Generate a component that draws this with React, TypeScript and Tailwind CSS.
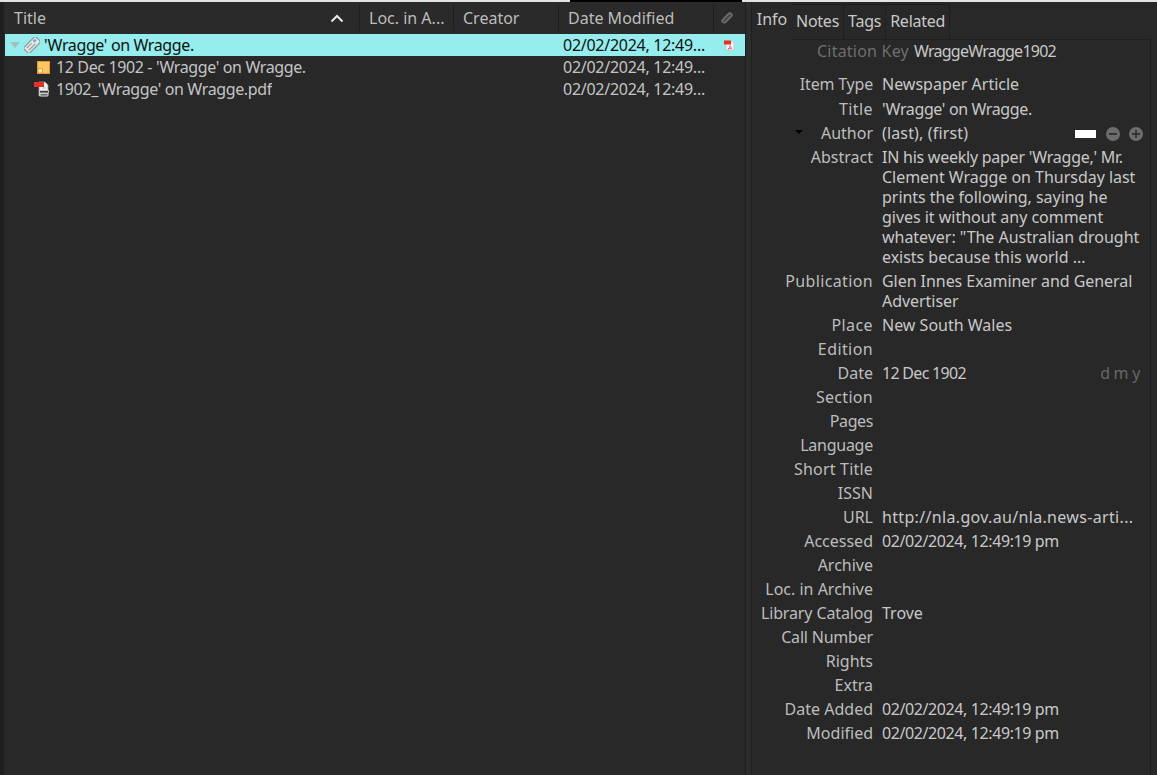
/**
 * Zotero-style item list with an info pane (dark theme)
 */

const font = { fontFamily: '"Noto Sans", sans-serif' }

interface Field {
  label: string
  lines?: string[]
  className?: string
  labelClass?: string
  valueClass?: string
  firstLineClass?: string
}

const stamp = '02/02/2024, 12:49:19 pm'

const fields: Field[] = [
  { label: 'Item Type', lines: ['Newspaper Article'], className: 'mt-[9px]', labelClass: 'tracking-[-0.2px]' },
  { label: 'Title', lines: ["'Wragge' on Wragge."], className: 'mt-px', labelClass: 'tracking-[0.4px]', valueClass: 'tracking-[-0.37px]' },
  { label: 'Author', lines: ['(last), (first)'], valueClass: 'tracking-[0.15px]' },
  {
    label: 'Abstract',
    lines: [
      "IN his weekly paper 'Wragge,' Mr.",
      'Clement Wragge on Thursday last',
      'prints the following, saying he',
      'gives it without any comment',
      'whatever: "The Australian drought',
      'exists because this world ...',
    ],
    valueClass: 'tracking-[-0.03px]',
    firstLineClass: 'tracking-[-0.25px]',
  },
  { label: 'Publication', lines: ['Glen Innes Examiner and General', 'Advertiser'], labelClass: 'tracking-[0.35px]', valueClass: 'tracking-[-0.05px]' },
  { label: 'Place', lines: ['New South Wales'], labelClass: 'tracking-[0.4px]' },
  { label: 'Edition', labelClass: 'tracking-[0.4px]' },
  { label: 'Date', lines: ['12 Dec 1902'], valueClass: 'tracking-[-0.7px]' },
  { label: 'Section', labelClass: 'tracking-[0.3px]' },
  { label: 'Pages', labelClass: 'tracking-[-0.4px]' },
  { label: 'Language', labelClass: 'tracking-[-0.25px]' },
  { label: 'Short Title', labelClass: 'tracking-[0.2px]' },
  { label: 'ISSN' },
  { label: 'URL', lines: ['http://nla.gov.au/nla.news-arti...'], valueClass: 'tracking-[0.33px]' },
  { label: 'Accessed', lines: [stamp], valueClass: 'tracking-[-0.4px]' },
  { label: 'Archive' },
  { label: 'Loc. in Archive' },
  { label: 'Library Catalog', lines: ['Trove'], labelClass: 'tracking-[-0.13px]' },
  { label: 'Call Number', labelClass: 'tracking-[-0.2px]' },
  { label: 'Rights' },
  { label: 'Extra' },
  { label: 'Date Added', lines: [stamp], valueClass: 'tracking-[-0.4px]' },
  { label: 'Modified', lines: [stamp], valueClass: 'tracking-[-0.4px]' },
]

function SmallPdfIcon() {
  return (
    <svg width="11" height="11" viewBox="0 0 11 11" className="shrink-0">
      <path d="M2 1h6l2 2v7H2z" fill="#f6f6f6" stroke="#bdbdbd" strokeWidth="0.6" />
      <rect x="0" y="0.5" width="7" height="4" fill="#e5312b" />
      <path d="M4 9c1.500-.7 2-2.500 2-3.500 0 1.500.7 2.200 2 2.800-1.400-.2-2.800 0-4 .7z" fill="none" stroke="#e0524c" strokeWidth="0.8" />
    </svg>
  )
}

function PdfAttachmentIcon() {
  return (
    <svg width="16" height="16" viewBox="0 0 16 16" className="shrink-0">
      <path d="M5 1h6l3 3v11H5z" fill="#f4f4f4" stroke="#a0a0a0" strokeWidth="0.8" />
      <rect x="0" y="1" width="10" height="5" fill="#e5312b" />
      <path d="M8 7h4" stroke="#bbb" strokeWidth="1" />
      <rect x="5.500" y="9.500" width="9" height="2.500" fill="#3d3d3d" stroke="#cfcfcf" strokeWidth="0.8" />
      <rect x="6" y="12.500" width="8" height="2.500" rx="1" fill="#6a6a6a" stroke="#dcdcdc" strokeWidth="0.8" />
    </svg>
  )
}

function NoteIcon() {
  return (
    <svg width="13" height="13" viewBox="0 0 13 13" className="shrink-0">
      <rect x="0.500" y="0.500" width="12" height="12" fill="#fbc765" stroke="#ea9a2d" />
      <path d="M1 7.500h4.500V12H1z" fill="#fde6b0" stroke="#e2922a" strokeWidth="0.8" />
    </svg>
  )
}

function ArticleIcon() {
  return (
    <svg width="16" height="16" viewBox="0 0 16 16" className="shrink-0">
      <g transform="rotate(-45 8 8)">
        <rect x="-0.500" y="4" width="17" height="8" rx="1.500" fill="#e2e6e6" stroke="#7d8a8a" />
        <path d="M2 6.500h7M2 9.500h9" stroke="#8a9696" strokeWidth="1" />
        <rect x="11.500" y="5.500" width="3" height="2.500" fill="#6aa5e0" />
      </g>
    </svg>
  )
}

function HeaderCell({ label, className }: { label: string; className: string }) {
  return (
    <div className={`flex h-[26px] items-center whitespace-nowrap border-r border-[#1e1e1e] pl-[9px] text-[#bdbdbd] ${className}`}>
      {label}
    </div>
  )
}

function ItemRow({ icon, title, selected, indent }: { icon: React.ReactNode; title: string; selected?: boolean; indent?: boolean }) {
  return (
    <div className={`flex h-[22px] items-center ${selected ? 'bg-[#95eded] text-[#111]' : 'text-[#c4c4c4]'}`}>
      <div className={`flex w-[354px] items-center ${indent ? 'pl-[30px]' : 'pl-[5px]'}`}>
        {selected && <div className="mr-[4px] h-0 w-0 border-x-[5px] border-t-[6px] border-x-transparent border-t-[#a9bcbc]" />}
        {indent ? <div className="flex w-[16px] justify-end pr-px">{icon}</div> : icon}
        <span className={`truncate tracking-[-0.37px] ${indent ? 'ml-[5px]' : 'ml-[4px]'}`}>{title}</span>
      </div>
      <div className="w-[204px]" />
      <div className="w-[147px] whitespace-nowrap tracking-[-0.27px]">02/02/2024, 12:49...</div>
      <div className="flex flex-1 justify-center pl-[4px]">{selected && <SmallPdfIcon />}</div>
    </div>
  )
}

function Tab({ label, active }: { label: string; active?: boolean }) {
  return (
    <div className={`flex items-center justify-center text-[#c8c8c8] ${active ? 'h-[34px] w-[40px] pb-[1px]' : 'mt-[2px] h-[36px] border-b border-r border-t border-[#1f1f1f] px-[4px] pb-[2px] tracking-[-0.25px]'}`}>
      {label}
    </div>
  )
}

function RoundButton({ plus }: { plus?: boolean }) {
  return (
    <div className="relative h-[14px] w-[14px] rounded-full bg-[#6c6c6c]">
      <div className="absolute left-[3px] top-[6px] h-[2px] w-[8px] bg-[#333]" />
      {plus && <div className="absolute left-[6px] top-[3px] h-[8px] w-[2px] bg-[#333]" />}
    </div>
  )
}

function FieldRow({ field }: { field: Field }) {
  return (
    <div className={`relative flex py-[2px] ${field.className ?? ''}`}>
      <div className={`w-[121px] shrink-0 whitespace-nowrap text-right leading-5 text-[#bdbdbd] ${field.labelClass ?? ''}`}>
        {field.label}
      </div>
      <div className={`ml-[9px] flex-1 whitespace-nowrap leading-5 text-[#c8c8c8] ${field.valueClass ?? ''}`}>
        {field.lines?.map((line, i) => (
          <div key={line} className={i === 0 ? field.firstLineClass : undefined}>{line}</div>
        ))}
      </div>
      {field.label === 'Author' && (
        <>
          <div className="absolute left-[43px] top-[9px] h-0 w-0 border-x-[4px] border-t-[4px] border-x-transparent border-t-black" />
          <div className="absolute right-[7px] top-[6px] flex items-center gap-[9px]">
            <div className="mr-px h-[8px] w-[21px] bg-white" />
            <RoundButton />
            <RoundButton plus />
          </div>
        </>
      )}
      {field.label === 'Date' && (
        <div className="absolute right-[10px] top-[2px] leading-5 tracking-[-0.3px] text-[#666]">d m y</div>
      )}
    </div>
  )
}

export default function App() {
  return (
    <div className="flex h-[775px] w-[1157px] flex-col overflow-hidden bg-[#282828] text-[16px]" style={font}>
      {/* strip left over from the window above */}
      <div className="flex h-[2px] shrink-0">
        <div className="w-[570px] bg-[#e4e4e4]" />
        <div className="w-[172px] bg-black" />
        <div className="flex-1 bg-[#e4e4e4]" />
      </div>

      <div className="flex min-h-0 flex-1">
        {/* item list */}
        <div className="flex w-[745px] shrink-0 flex-col border-l-[4px] border-[#1f1f1f] pl-px">
          <div className="flex h-[32px] items-center bg-[#2a2a2a]">
            <div className="flex h-[26px] w-[355px] items-center justify-between border-r border-[#1e1e1e] pl-[9px] pr-[15px] text-[#bdbdbd]">
              <span>Title</span>
              <svg width="14" height="9" viewBox="0 0 14 9">
                <path d="M1.500 7.500L7 2l5.500 5.500" fill="none" stroke="#e8e8e8" strokeWidth="2" />
              </svg>
            </div>
            <HeaderCell label="Loc. in A..." className="w-[94px]" />
            <HeaderCell label="Creator" className="w-[105px]" />
            <HeaderCell label="Date Modified" className="w-[155px]" />
            <div className="flex flex-1 justify-center pr-[5px]">
              <svg width="12" height="12" viewBox="0 0 12 12">
                <rect x="0" y="4" width="12" height="4" rx="2" transform="rotate(-45 6 6)" fill="#4a4a4a" stroke="#747474" strokeWidth="1.400" />
              </svg>
            </div>
          </div>
          <div>
            <ItemRow selected icon={<ArticleIcon />} title="'Wragge' on Wragge." />
            <ItemRow indent icon={<NoteIcon />} title="12 Dec 1902 - 'Wragge' on Wragge." />
            <ItemRow indent icon={<PdfAttachmentIcon />} title="1902_'Wragge' on Wragge.pdf" />
          </div>
        </div>

        {/* splitter */}
        <div className="w-[7px] shrink-0 border-x border-[#1f1f1f] bg-[#2d2d2d]" />

        {/* info pane */}
        <div className="flex min-w-0 flex-1 flex-col pr-[6px]">
          <div className="flex h-[38px] shrink-0 items-start">
            <Tab active label="Info" />
            <Tab label="Notes" />
            <Tab label="Tags" />
            <Tab label="Related" />
            <div className="mt-[37px] h-px flex-1 bg-[#1f1f1f]" />
          </div>
          <div className="flex min-h-0 flex-1 flex-col border-r border-[#1f1f1f]">
            <div className="flex pb-[2px] pt-px">
              <div className="w-[157px] whitespace-nowrap text-right leading-5 tracking-[0.22px] text-[#6e6e6e]">Citation Key</div>
              <div className="ml-[5px] leading-5 tracking-[-0.75px] text-[#c8c8c8]">WraggeWragge1902</div>
            </div>
            {fields.map((field) => <FieldRow key={field.label} field={field} />)}
          </div>
        </div>
      </div>
    </div>
  )
}
